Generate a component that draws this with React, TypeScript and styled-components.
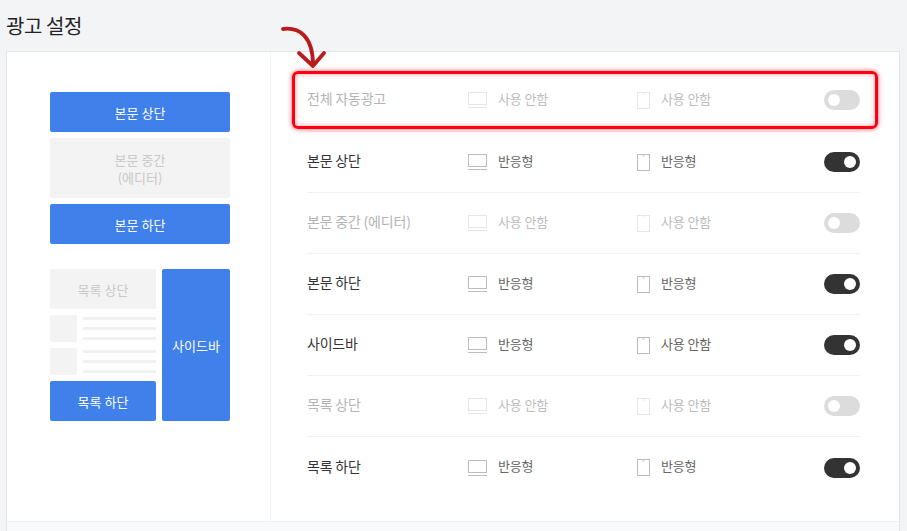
import styled, { createGlobalStyle } from 'styled-components'

const GlobalStyle = createGlobalStyle`
    html, body {
        margin: 0;
        padding: 0;
        height: 531px;
        overflow: hidden;
        background: #f3f4f6;
        font-family: "Noto Sans CJK KR", "Noto Sans", sans-serif;
    }
`

const Page = styled.div`
    position: relative;
    padding: 0 7px 0 6px;
    height: 531px;
    box-sizing: border-box;
`

const Title = styled.h1`
    margin: 0;
    height: 51px;
    padding-top: 11px;
    box-sizing: border-box;
    font-size: 20px;
    line-height: 30px;
    font-weight: 400;
    letter-spacing: -0.4px;
    color: #222;
`

const Card = styled.section`
    background: #fff;
    border: 1px solid #e3e5e9;
    border-bottom: 0;
    height: 480px;
    box-sizing: border-box;
`

const Body = styled.div`
    display: flex;
    height: 469px;
    border-bottom: 1px solid #eef0f2;
`

const Footer = styled.div`
    height: 10px;
    background: #f9fafb;
`

const Preview = styled.aside`
    width: 264px;
    flex: none;
    box-sizing: border-box;
    border-right: 1px solid #f1f2f5;
    padding: 40px 0 0 43px;
`

const Stack = styled.div`
    width: 180px;
    display: flex;
    flex-direction: column;
    gap: 6px;
`

const Slot = styled.div<{ $on?: boolean; $h: number }>`
    height: ${p => p.$h}px;
    box-sizing: border-box;
    border-radius: 2px;
    display: flex;
    align-items: center;
    justify-content: center;
    text-align: center;
    font-size: 13px;
    line-height: 17px;
    background: ${p => (p.$on ? '#3f80ea' : '#f3f3f3')};
    color: ${p => (p.$on ? '#fff' : '#c8c8c8')};
`

const TwoLines = styled.span`
    display: block;
    line-height: 18px;
    padding-top: 2px;
`

const ListArea = styled.div`
    width: 180px;
    display: grid;
    grid-template-columns: 106px 68px;
    column-gap: 6px;
    margin-top: 25px;
`

const ListColumn = styled.div`
    display: flex;
    flex-direction: column;
    gap: 6px;
`

const ListItem = styled.div`
    height: 27px;
    display: flex;
    gap: 6px;
`

const Thumb = styled.div`
    width: 27px;
    height: 27px;
    border-radius: 2px;
    background: #f3f3f3;
`

const Lines = styled.div`
    flex: 1;
    display: flex;
    flex-direction: column;
    gap: 7px;
    padding-top: 2px;

    span {
        height: 3px;
        background: #f1f1f1;
    }
`

const Settings = styled.div`
    flex: 1;
    padding: 18px 39px 0 36px;
`

const Row = styled.div<{ $off?: boolean }>`
    display: grid;
    grid-template-columns: 161px 169px 1fr 36px;
    align-items: center;
    height: 61px;
    box-sizing: border-box;
    border-bottom: 1px solid #f1f2f5;
    color: ${p => (p.$off ? '#b4b4b4' : '#333')};

    &:first-child {
        height: 62px;
        padding-bottom: 1px;
    }

    &:last-child {
        border-bottom: 0;
    }
`

const Label = styled.div`
    font-size: 14px;
    line-height: 20px;
    letter-spacing: -0.2px;
    margin-top: -4px;
`

const Device = styled.div<{ $off?: boolean }>`
    display: flex;
    align-items: center;
    gap: 11px;
    font-size: 13px;
    letter-spacing: -0.15px;
    color: ${p => (p.$off ? '#bdbdbd' : '#666')};

    svg {
        flex: none;
        color: ${p => (p.$off ? '#e6e6e6' : '#bcbcbc')};
    }

    span {
        margin-top: -4px;
    }
`

const Toggle = styled.div<{ $on?: boolean }>`
    position: relative;
    width: 36px;
    height: 20px;
    border-radius: 10px;
    background: ${p => (p.$on ? '#333' : '#dcdcdc')};

    &::after {
        content: '';
        position: absolute;
        top: 4px;
        left: ${p => (p.$on ? '20px' : '4px')};
        width: 12px;
        height: 12px;
        border-radius: 50%;
        background: #fff;
    }
`

const Highlight = styled.div`
    position: absolute;
    left: 292px;
    top: 71px;
    width: 586px;
    height: 58px;
    box-sizing: border-box;
    border: 3px solid #ff0010;
    border-radius: 6px;
    box-shadow: 0 0 5px rgba(255, 0, 30, 0.65), inset 0 0 5px rgba(255, 0, 30, 0.4);
    pointer-events: none;
`

const Arrow = styled.svg`
    position: absolute;
    left: 279px;
    top: 24px;
`

function Laptop() {
    return (
        <svg width="19" height="16" viewBox="0 0 19 16" fill="none" stroke="currentColor" strokeWidth="1">
            <rect x="0.5" y="0.5" width="18" height="12" />
            <path d="M0 15.5h19" />
        </svg>
    )
}

function Phone() {
    return (
        <svg width="13" height="17" viewBox="0 0 13 17" fill="none" stroke="currentColor" strokeWidth="1">
            <rect x="0.5" y="0.5" width="12" height="16" />
            <path d="M5.5 2h2" />
        </svg>
    )
}

const rows = [
    { name: '전체 자동광고', pc: '사용 안함', mobile: '사용 안함', on: false },
    { name: '본문 상단', pc: '반응형', mobile: '반응형', on: true },
    { name: '본문 중간 (에디터)', pc: '사용 안함', mobile: '사용 안함', on: false },
    { name: '본문 하단', pc: '반응형', mobile: '반응형', on: true },
    { name: '사이드바', pc: '반응형', mobile: '사용 안함', on: true },
    { name: '목록 상단', pc: '사용 안함', mobile: '사용 안함', on: false },
    { name: '목록 하단', pc: '반응형', mobile: '반응형', on: true },
]

function PostLines() {
    return (
        <ListItem>
            <Thumb />
            <Lines>
                <span />
                <span />
                <span />
            </Lines>
        </ListItem>
    )
}

export default function App() {
    return (
        <Page>
            <GlobalStyle />
            <Title>광고 설정</Title>
            <Card>
                <Body>
                    <Preview>
                        <Stack>
                            <Slot $on $h={40}>본문 상단</Slot>
                            <Slot $h={60}><TwoLines>본문 중간<br />(에디터)</TwoLines></Slot>
                            <Slot $on $h={40}>본문 하단</Slot>
                        </Stack>
                        <ListArea>
                            <ListColumn>
                                <Slot $h={40}>목록 상단</Slot>
                                <PostLines />
                                <PostLines />
                                <Slot $on $h={40}>목록 하단</Slot>
                            </ListColumn>
                            <Slot $on $h={152}>사이드바</Slot>
                        </ListArea>
                    </Preview>
                    <Settings>
                        {rows.map(r => (
                            <Row key={r.name} $off={!r.on}>
                                <Label>{r.name}</Label>
                                <Device $off={!r.on}><Laptop /><span>{r.pc}</span></Device>
                                <Device $off={!r.on}><Phone /><span>{r.mobile}</span></Device>
                                <Toggle $on={r.on} />
                            </Row>
                        ))}
                    </Settings>
                </Body>
                <Footer />
            </Card>
            <Highlight />
            <Arrow width="50" height="48" viewBox="0 0 50 48" fill="none">
                <path d="M4 5C20 3 34 12 34 41" stroke="#b91c1c" strokeWidth="3.8" strokeLinecap="round" />
                <path d="M20 29L34 42L45 29" stroke="#b91c1c" strokeWidth="3.8" strokeLinecap="round" strokeLinejoin="round" />
            </Arrow>
        </Page>
    )
}
